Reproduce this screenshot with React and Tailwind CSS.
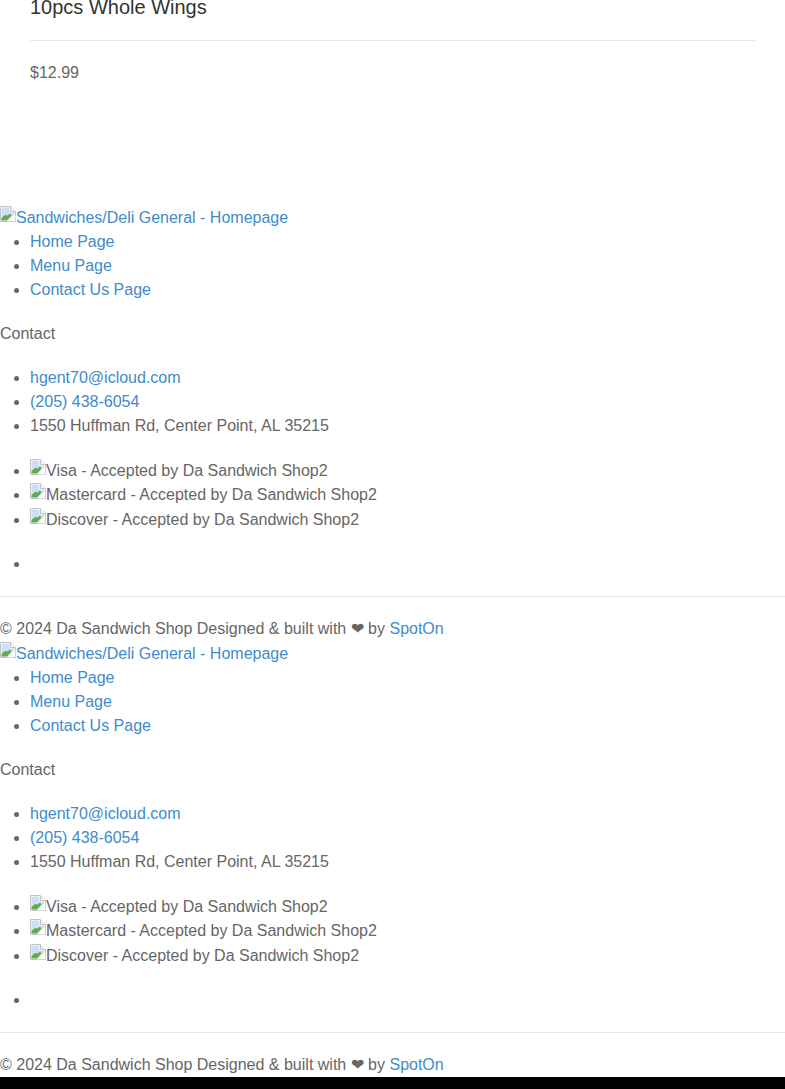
import React from "react";

const Broken = () => (
  <svg width="16" height="16" viewBox="0 0 16 16" className="inline-block align-[1px]">
    <path d="M0.5 0.5H10.5L15.5 5.5V15.5H0.5Z" fill="#fff" stroke="#c4c4c4" />
    <path d="M10.5 0.5V5.5H15.5" fill="#f4f4f4" stroke="#c4c4c4" />
    <path d="M1.5 1.5H9.5V6.5H14.5V8L7.5 14.5H1.5Z" fill="#cfdef5" />
    <path d="M1.5 14.5V12L5 9L7.5 9.5L10 7.5L11.5 9.5L7 14.5Z" fill="#5fae4a" />
    <path d="M10 15L15 9.5V15Z" fill="#fff" />
    <path d="M15.5 8.5V15.5H8" fill="none" stroke="#d4d4d4" />
  </svg>
);

const A = ({ children }) => <a href="#" className="text-[#428bca]">{children}</a>;

const Img = ({ alt, link }) => (
  <span className={link ? "text-[#428bca]" : ""}>
    <Broken />
    {alt}
  </span>
);

const Footer = ({ last }) => (
  <footer>
    <a href="#" className="block h-6 text-[#428bca]">
      <Img alt="Sandwiches/Deli General - Homepage" link />
    </a>
    <ul className="list-disc pl-[30px]">
      <li><A>Home Page</A></li>
      <li><A>Menu Page</A></li>
      <li><A>Contact Us Page</A></li>
    </ul>
    <p className="mt-5">Contact</p>
    <ul className="mt-5 list-disc pl-[30px]">
      <li><A>hgent70@icloud.com</A></li>
      <li><A>(205) 438-6054</A></li>
      <li>1550 Huffman Rd, Center Point, AL 35215</li>
    </ul>
    <ul className="mt-[21px] list-disc pl-[30px]">
      <li className="h-6"><Img alt="Visa - Accepted by Da Sandwich Shop2" /></li>
      <li className="h-[25px]"><Img alt="Mastercard - Accepted by Da Sandwich Shop2" /></li>
      <li className="h-6"><Img alt="Discover - Accepted by Da Sandwich Shop2" /></li>
    </ul>
    <ul className="mt-5 list-disc pl-[30px]">
      <li>&nbsp;</li>
    </ul>
    <hr className="mt-5 border-t border-[#e5e5e5]" />
    <p className={last ? "mt-5" : "mt-5 mb-px"}>
      © 2024 Da Sandwich Shop Designed &amp; built with ❤ by <A>SpotOn</A>
    </p>
  </footer>
);

export default function App() {
  return (
    <div className="h-[1089px] overflow-hidden bg-white font-['Liberation_Sans',Arial,sans-serif] text-base leading-6 text-[#666]">
      <section className="h-[206px] pt-px px-[30px]">
        <h2 className="mt-[-7px] text-[20px] leading-[27px] text-[#333]">10pcs Whole Wings</h2>
        <hr className="mt-[19px] border-t border-[#e5e5e5]" />
        <p className="mt-5">$12.99</p>
      </section>
      <Footer />
      <Footer last />
      <div className="h-3 bg-black" />
    </div>
  );
}
